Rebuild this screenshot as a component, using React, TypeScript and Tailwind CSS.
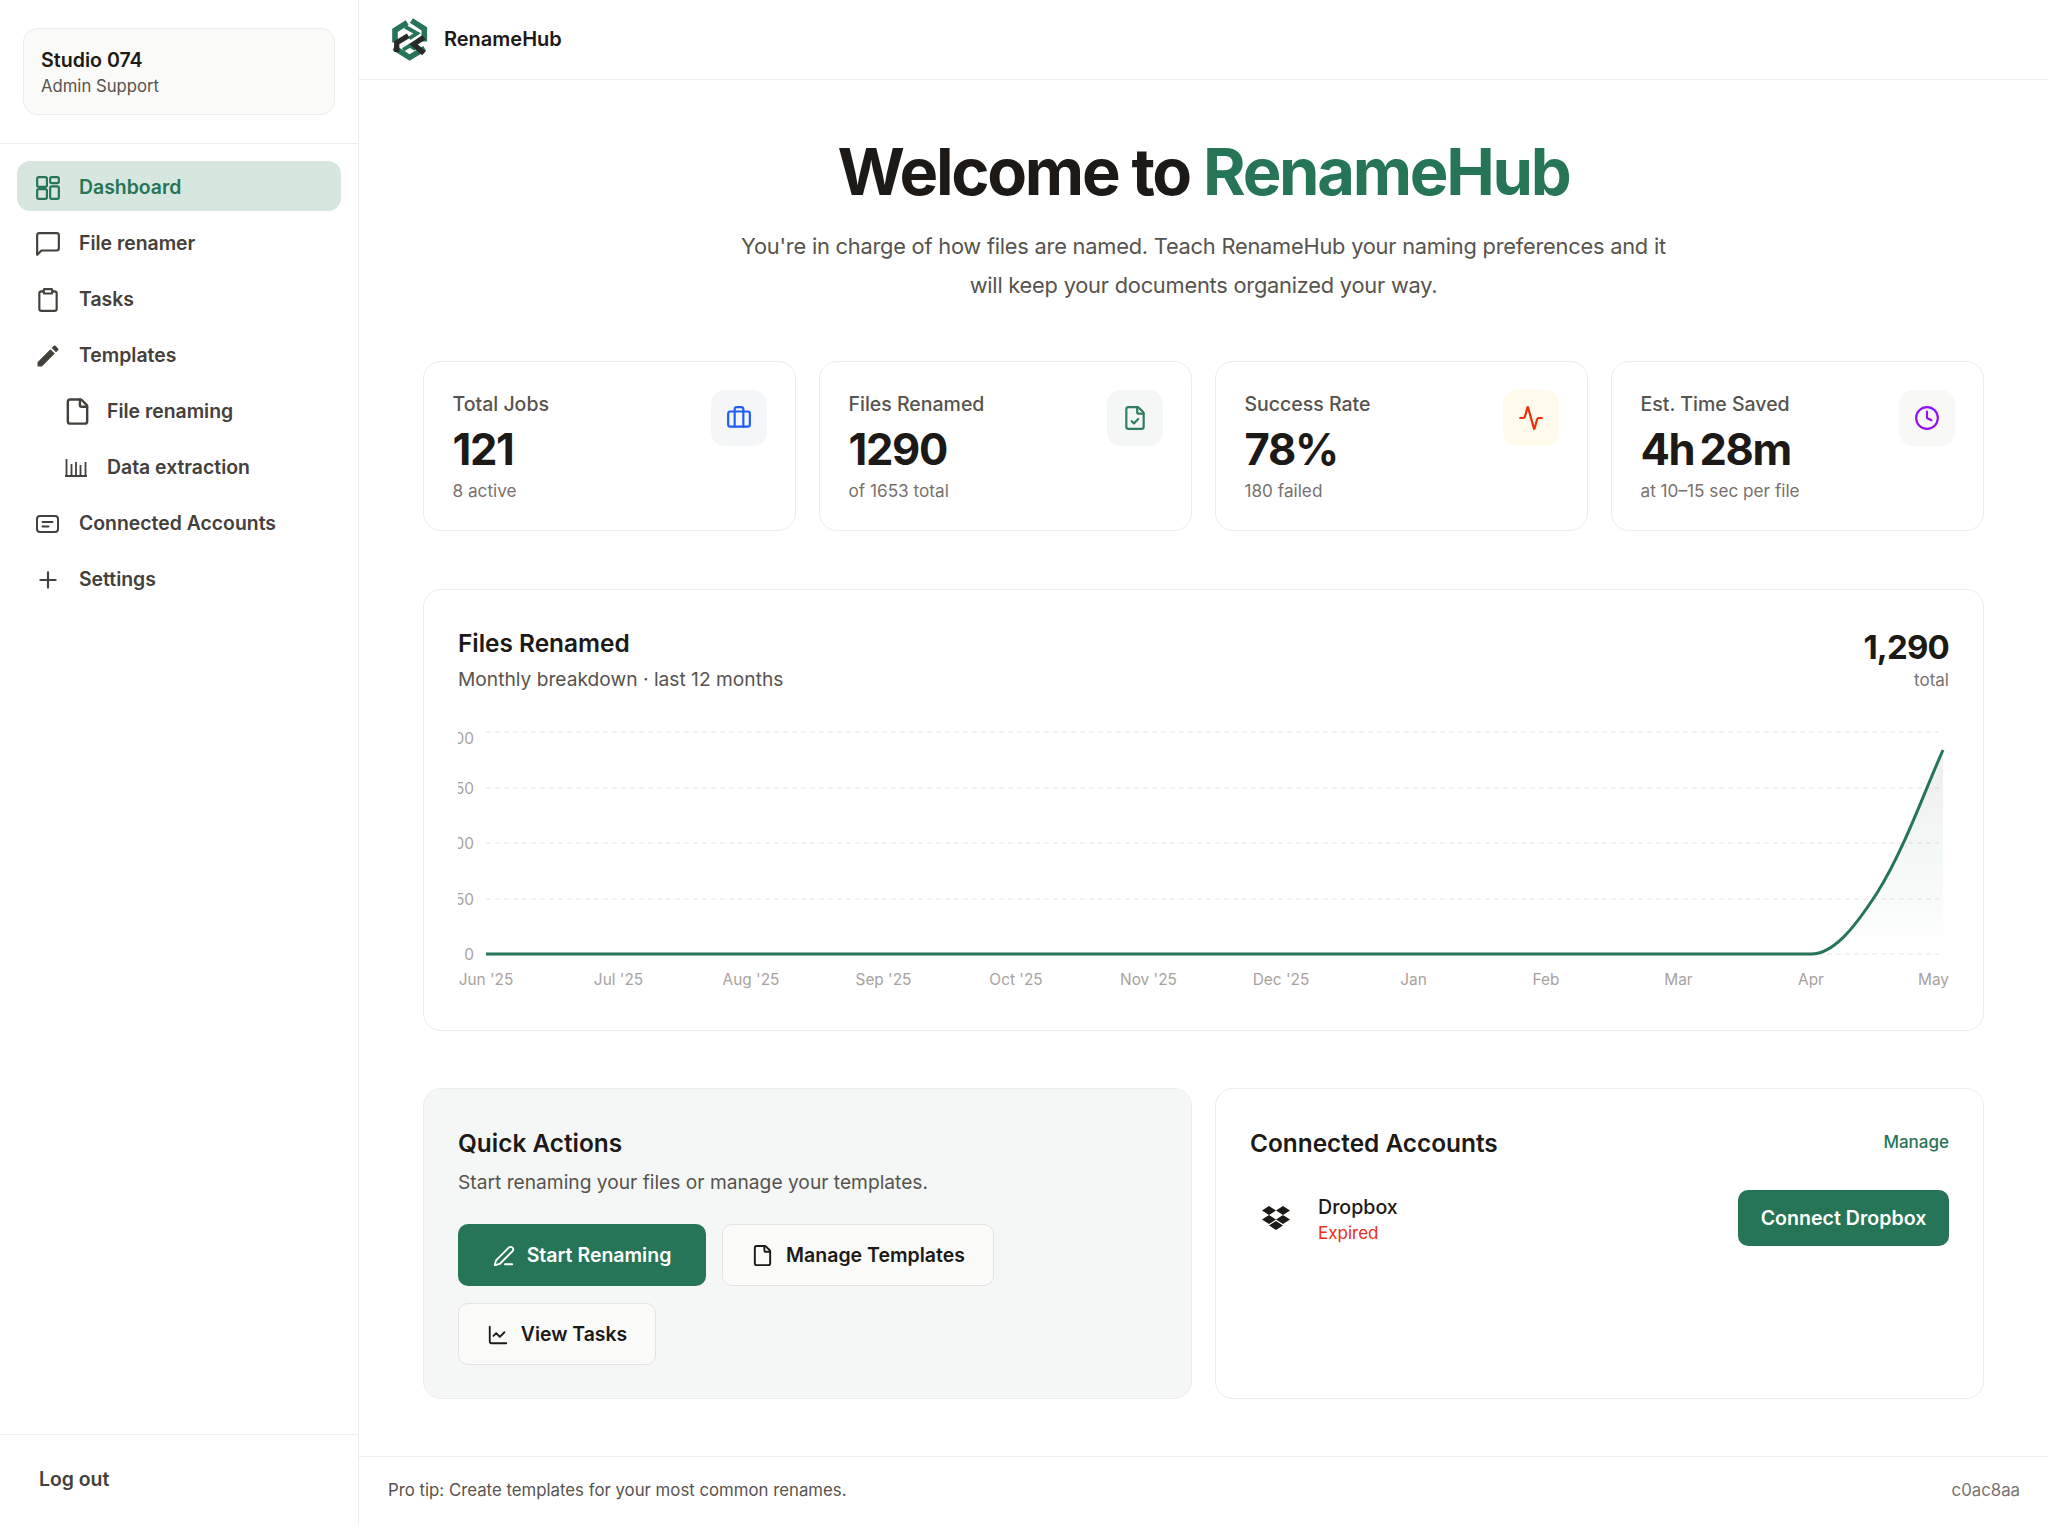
import { Activity, Briefcase, ChartLine, Clipboard, Clock, File, FileCheck, PenLine, Plus } from 'lucide-react'
import { FaDropbox } from 'react-icons/fa'
import { MdEdit } from 'react-icons/md'

const green = '#257556'

function DashIcon() {
  return (
    <svg width="26" height="26" viewBox="0 0 24 24" fill="none" stroke="currentColor" strokeWidth="2" strokeLinejoin="round">
      <rect x="2" y="2" width="9" height="9" rx="1.5" />
      <rect x="14" y="2" width="8" height="5.5" rx="1.5" />
      <rect x="2" y="13" width="9" height="9" rx="1.5" />
      <rect x="14" y="10.5" width="8" height="11.5" rx="1.5" />
    </svg>
  )
}

function ChatIcon() {
  return (
    <svg width="26" height="26" viewBox="0 0 24 24" fill="none" stroke="currentColor" strokeWidth="2" strokeLinejoin="round">
      <path d="M22 16a2 2 0 0 1-2 2H6l-4 4V4a2 2 0 0 1 2-2h16a2 2 0 0 1 2 2z" />
    </svg>
  )
}

function BarsIcon() {
  return (
    <svg width="22" height="18" viewBox="0 0 22 18" fill="none" stroke="currentColor" strokeWidth="1.8" className="ml-[2px]">
      <path d="M0 17h22M1.5 0v17M6.5 5v12M11 3v14M15.5 6v11M20.5 3v14" />
    </svg>
  )
}

function AccountIcon() {
  return (
    <svg width="23" height="18" viewBox="0 0 23 18" fill="none" stroke="currentColor" strokeWidth="2" strokeLinecap="round" className="ml-[1px]">
      <rect x="1" y="1" width="21" height="16" rx="3" />
      <path d="M6.5 7h10M6.5 11.5h6" />
    </svg>
  )
}

function Logo() {
  return (
    <svg width="40" height="44" viewBox="20 12 112 126" fill="none" strokeLinejoin="miter">
      <g stroke="#257556" strokeWidth="16">
        <path d="M33 85V50L68 28" />
        <path d="M80 22l37 24v36" />
        <path d="M62 40l34 19-22 14" strokeWidth="11" />
        <path d="M30 100l45 28 43-26" />
        <path d="M92 104L75 94 56 106" strokeWidth="11" />
      </g>
      <g stroke="#2a2a28" strokeWidth="15">
        <path d="M38 112V86l33-20" />
        <path d="M116 70L86 90l30 26" />
      </g>
    </svg>
  )
}

const navItems = [
  { name: 'Dashboard', icon: <DashIcon />, active: true },
  { name: 'File renamer', icon: <ChatIcon /> },
  { name: 'Tasks', icon: <Clipboard size={26} /> },
  { name: 'Templates', icon: <MdEdit size={28} className="-ml-px" /> },
  { name: 'File renaming', icon: <File size={29} />, sub: true },
  { name: 'Data extraction', icon: <BarsIcon />, sub: true },
  { name: 'Connected Accounts', icon: <AccountIcon /> },
  { name: 'Settings', icon: <Plus size={26} /> },
]

const stats = [
  { label: 'Total Jobs', value: '121', note: '8 active', icon: <Briefcase size={26} color="#1d5cff" />, box: 'bg-[#f4f6f8]' },
  { label: 'Files Renamed', value: '1290', note: 'of 1653 total', icon: <FileCheck size={26} color="#2f7d5e" />, box: 'bg-[#f4f7f6]' },
  { label: 'Success Rate', value: '78%', note: '180 failed', icon: <Activity size={26} color="#ea2e0e" />, box: 'bg-[#fefbec]' },
  { label: 'Est. Time Saved', value: '4h 28m', note: 'at 10–15 sec per file', icon: <Clock size={26} color="#9310f5" />, box: 'bg-[#f8f8f7]' },
]

const months = ["Jun '25", "Jul '25", "Aug '25", "Sep '25", "Oct '25", "Nov '25", "Dec '25", 'Jan', 'Feb', 'Mar', 'Apr', 'May']
const ticks = [
  { y: 142, label: '1000', dy: 12 },
  { y: 198, label: '750', dy: 6 },
  { y: 253, label: '500', dy: 6 },
  { y: 309, label: '250', dy: 6 },
  { y: 364, label: '0', dy: 6 },
]

function Chart() {
  const curve = 'M28 364H1353C1375 364 1395 340 1419 303C1445 262 1465 205 1485 160'
  return (
    <svg width="1491" height="402" viewBox="0 0 1491 402" className="absolute left-[34px] top-0">
      <defs>
        <linearGradient id="fill" x1="0" y1="0" x2="0" y2="1">
          <stop offset="0%" stopColor="#57534e" stopOpacity="0.1" />
          <stop offset="55%" stopColor={green} stopOpacity="0.05" />
          <stop offset="100%" stopColor={green} stopOpacity="0" />
        </linearGradient>
      </defs>
      {ticks.map((t) => (
        <g key={t.label}>
          <line x1="28" x2="1481" y1={t.y} y2={t.y} stroke="#e7e5e4" strokeDasharray="5 4" />
          <text x="16" y={t.y + t.dy} textAnchor="end" fontSize="15.4" fill="#a8a29e">{t.label}</text>
        </g>
      ))}
      {months.map((m, i) => (
        <text key={m} x={i === 11 ? 1491 : 28 + 132.5 * i} y={395} textAnchor={i === 11 ? 'end' : 'middle'} fontSize="15.4" fill="#a8a29e">{m}</text>
      ))}
      <path d={curve + 'V364H1353Z'} fill="url(#fill)" />
      <path d={curve} fill="none" stroke={green} strokeWidth="3" />
    </svg>
  )
}

function StatCard({ s }: { s: (typeof stats)[number] }) {
  return (
    <div className="flex h-[170px] justify-between rounded-[18px] border border-[#ececeb] bg-white pt-[30px] pr-[28px] pl-[28.5px]">
      <div>
        <div className="text-[19.5px] leading-[24px] font-medium text-[#57534e]">{s.label}</div>
        <div className="mt-[8px] text-[43.5px] leading-[50px] font-bold tracking-[-0.03em] [word-spacing:-0.09em] text-[#1c1917]">{s.value}</div>
        <div className="mt-[5px] text-[17.2px] leading-[24px] text-[#78716c]">{s.note}</div>
      </div>
      <div className={`-mt-[2px] flex h-[56px] w-[56px] items-center justify-center rounded-[14px] ${s.box}`}>{s.icon}</div>
    </div>
  )
}

export default function App() {
  return (
    <div className="flex h-screen overflow-hidden bg-white font-['Inter',sans-serif] text-[#1c1917]">
      <aside className="flex w-[359px] shrink-0 flex-col border-r border-[#efeeed]">
        <div className="border-b border-[#efeeed] px-[23px] py-[28px]">
          <div className="h-[87px] rounded-[14px] border border-[#ececeb] bg-[#fafaf9] px-[17px] pt-[18px]">
            <div className="text-[19.6px] leading-[27px] font-semibold">Studio 074</div>
            <div className="text-[16.7px] leading-[24px] text-[#57534e]">Admin Support</div>
          </div>
        </div>
        <nav className="flex flex-col gap-[6px] px-[17px] pt-[17px]">
          {navItems.map((item) => (
            <div
              key={item.name}
              className={`flex h-[50px] items-center rounded-[13px] pt-[3px] text-[19.4px] font-semibold ${item.active ? 'bg-[#d7e6df] text-[#257556]' : 'text-[#44403c]'} ${item.sub ? 'pl-[46px]' : 'pl-[18px]'}`}
            >
              <span className="flex w-[44px] shrink-0 items-center">{item.icon}</span>
              {item.name}
            </div>
          ))}
        </nav>
        <div className="mt-auto flex h-[90px] items-center border-t border-[#efeeed] pl-[39px] text-[19.4px] font-semibold text-[#44403c]">
          Log out
        </div>
      </aside>

      <div className="flex min-w-0 flex-1 flex-col">
        <header className="flex h-[80px] shrink-0 items-center gap-[14px] border-b border-[#efeeed] pl-[31px] pb-[2px]">
          <Logo />
          <span className="text-[20px] font-semibold">RenameHub</span>
        </header>

        <main className="flex-1 px-[64px]">
          <div className="pt-[50px] text-center">
            <h1 className="text-[65px] leading-[84px] font-bold tracking-[-0.035em]">
              Welcome to <span className="text-[#257556]">RenameHub</span>
            </h1>
            <p className="mx-auto mt-[13px] max-w-[960px] text-[21.8px] leading-[39px] tracking-[-0.01em] text-[#57534e]">
              You're in charge of how files are named. Teach RenameHub your naming preferences and it will keep your documents organized your way.
            </p>
          </div>

          <div className="mt-[56px] grid grid-cols-4 gap-[23px]">
            {stats.map((s) => (
              <StatCard key={s.label} s={s} />
            ))}
          </div>

          <section className="relative mt-[58px] h-[442px] rounded-[18px] border border-[#ececeb] px-[34px] pt-[36px]">
            <div className="flex justify-between">
              <div>
                <h2 className="-mt-px text-[24.4px] leading-[36px] font-semibold">Files Renamed</h2>
                <p className="text-[19.2px] leading-[36px] text-[#57534e]">Monthly breakdown · last 12 months</p>
              </div>
              <div className="text-right">
                <div className="text-[33px] leading-[42px] font-bold tracking-tight">1,290</div>
                <div className="text-[17px] leading-[24px] text-[#78716c]">total</div>
              </div>
            </div>
            <Chart />
          </section>

          <div className="mt-[57px] grid h-[311px] grid-cols-2 gap-[23px]">
            <section className="rounded-[18px] border border-[#ececeb] bg-[#f4f7f6] px-[34px] pt-[37px]">
              <h2 className="text-[24.4px] leading-[34px] font-semibold">Quick Actions</h2>
              <p className="mt-[4px] text-[19.2px] leading-[36px] text-[#57534e]">Start renaming your files or manage your templates.</p>
              <div className="mt-[24px] flex flex-wrap gap-x-[16px] gap-y-[17px]">
                <button className="flex h-[62px] w-[248px] items-center justify-center gap-[12px] rounded-[10px] bg-[#257556] pt-[1px] text-[19.5px] font-semibold text-white">
                  <PenLine size={22} />
                  Start Renaming
                </button>
                <button className="flex h-[62px] w-[272px] items-center justify-center gap-[12px] rounded-[10px] border border-[#e4e3e1] bg-[#fafaf9] pt-[1px] text-[19.5px] font-semibold">
                  <File size={23} />
                  Manage Templates
                </button>
                <button className="flex h-[62px] w-[198px] items-center justify-center gap-[12px] rounded-[10px] border border-[#e4e3e1] bg-[#fafaf9] pt-[1px] text-[19.4px] font-semibold">
                  <ChartLine size={22} />
                  View Tasks
                </button>
              </div>
            </section>
            <section className="rounded-[18px] border border-[#ececeb] px-[34px] pt-[37px]">
              <div className="flex items-center justify-between">
                <h2 className="text-[24.4px] leading-[34px] font-semibold">Connected Accounts</h2>
                <span className="text-[17px] font-medium text-[#257556]">Manage</span>
              </div>
              <div className="mt-[30px] flex items-center justify-between">
                <div className="flex items-center">
                  <span className="flex w-[68px] justify-center pr-[16px]"><FaDropbox size={28} /></span>
                  <div>
                    <div className="text-[19.6px] leading-[30px] font-medium">Dropbox</div>
                    <div className="text-[17px] leading-[22px] text-[#ea2e0e]">Expired</div>
                  </div>
                </div>
                <button className="h-[56px] w-[211px] rounded-[10px] bg-[#257556] pt-[1px] text-[19.6px] font-semibold text-white">Connect Dropbox</button>
              </div>
            </section>
          </div>
        </main>

        <footer className="flex h-[68px] shrink-0 items-center justify-between border-t border-[#efeeed] pr-[28px] pl-[29px] text-[16.8px] text-[#57534e]">
          <span>Pro tip: Create templates for your most common renames.</span>
          <span className="text-[#78716c]">c0ac8aa</span>
        </footer>
      </div>
    </div>
  )
}
